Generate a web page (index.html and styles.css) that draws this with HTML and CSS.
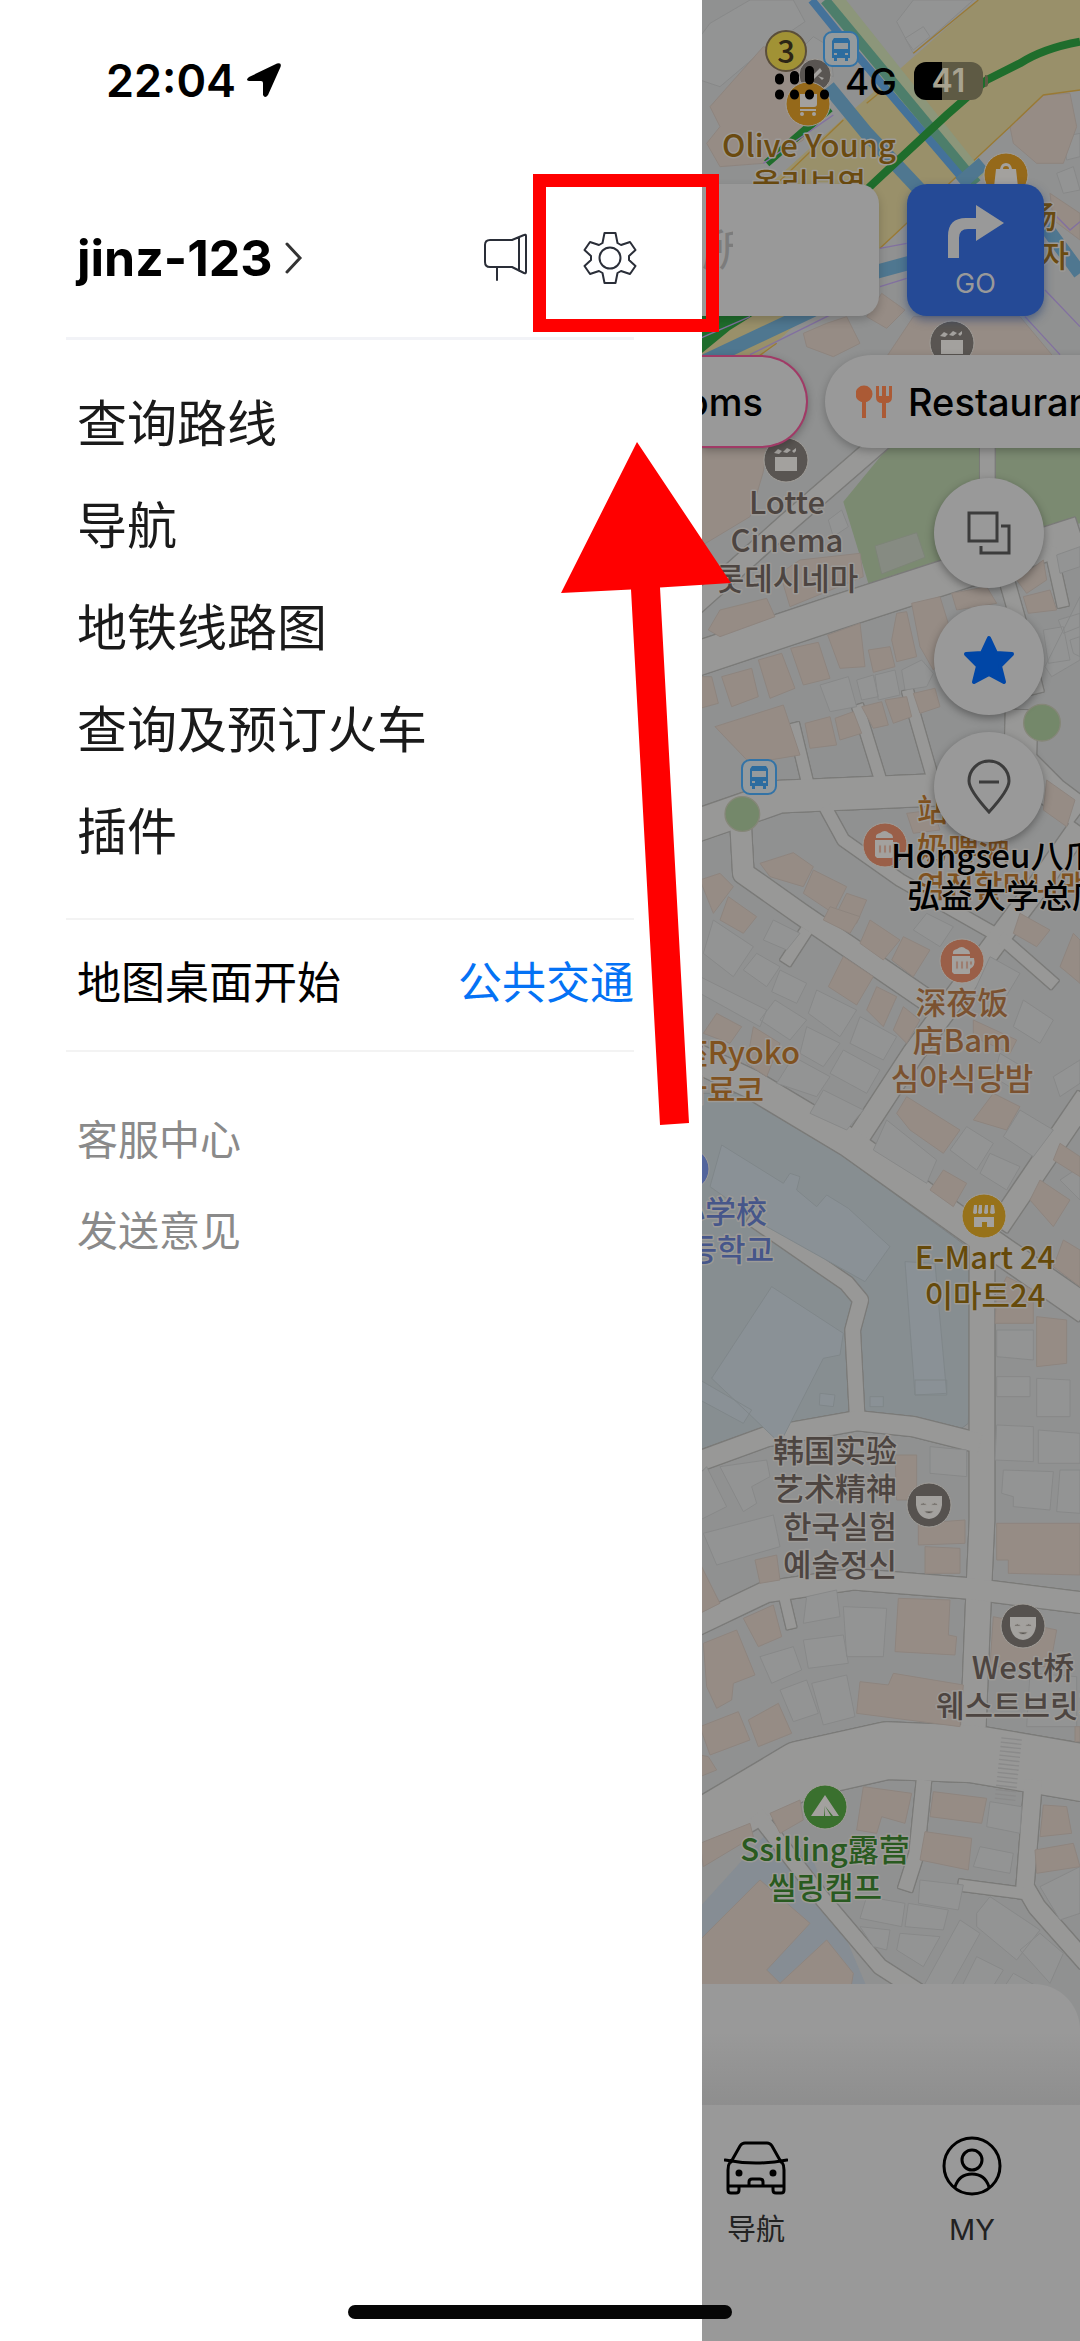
FILE: index.html
```html
<!DOCTYPE html>
<html lang="zh-CN">
<head>
	<meta charset="utf-8">
	<meta name="viewport" content="width=device-width,initial-scale=1.0">
	<title>地图</title>
	<link rel="stylesheet" href="styles.css">
</head>
<body>
	<!-- 左侧菜单 -->
	<aside class="drawer">
		<div class="status">
			<span class="time">22:04</span>
			<svg class="loc" viewBox="0 0 36 36"><path d="M3 15 31 1.500Q36 0 34.500 5L22 33Q19 37 17 33V21Q17 19 15 19H3Q-1 18 3 15Z"/></svg>
		</div>
		<header class="user">
			<a class="name" href="#">jinz-123
				<svg class="arrow" viewBox="0 0 18 32"><path d="M2 2 15 16 2 30"/></svg>
			</a>
			<button class="icon notice" aria-label="公告">
				<svg viewBox="0 0 46 48"><path d="M7 6H29L41 1Q43 0 43 2V38Q43 40 41 39L29 33H7Q2 33 2 28V11Q2 6 7 6ZM36 3V37M14 33V46"/></svg>
			</button>
			<button class="icon gear" aria-label="设置">
				<svg viewBox="0 0 48 48"><path d="M18.500 -1H29.500L31.500 9 35 11 44 8 49.500 16 43 22V26L49.500 32 44 40 35 37 31.500 39 29.500 49H18.500L16.500 39 13 37 4 40-1.500 32 5 26V22L-1.500 16 4 8 13 11 16.500 9Z"/><circle cx="24" cy="24" r="10.500"/></svg>
			</button>
		</header>
		<nav class="menu">
			<a href="#">查询路线</a>
			<a href="#">导航</a>
			<a href="#">地铁线路图</a>
			<a href="#">查询及预订火车</a>
			<a href="#">插件</a>
		</nav>
		<div class="start">
			<span>地图桌面开始</span>
			<a href="#">公共交通</a>
		</div>
		<nav class="help">
			<a href="#">客服中心</a>
			<a href="#">发送意见</a>
		</nav>
	</aside>

	<!-- 地图 -->
	<main class="app">
		<svg class="map" viewBox="2 0 378 2341" preserveAspectRatio="xMinYMin slice">
			<defs>
				<g id="roads">
					<path stroke-width="100" d="M-20 1980 400 1840 1140 1600"/>
					<path stroke-width="56" d="M-20 1820 260 1570 560 1310"/>
					<path stroke-width="44" d="M862 1300V1480M920 1740 960 1880 1010 2080"/>
					<path stroke-width="34" d="M280 2170 328 2370M472 2115 545 2350M622 2070 700 2340M1050 1640 1090 1820"/>
					<path stroke-width="95" d="M-20 2480 240 2390 700 2370 960 2300 965 2130"/>
					<path stroke-width="90" d="M960 2280 1060 2380 1140 2440"/>
					<path stroke-width="62" d="M120 2440 130 2620 300 2740 680 3000"/>
					<path stroke-width="36" d="M375 2420 430 2520 600 2640 900 2810"/>
					<path stroke-width="64" d="M1140 2480 1020 2650 900 2810 640 3160 470 3420"/>
					<path stroke-width="36" d="M900 2810 1065 2955M320 2790 255 2890"/>
					<path stroke-width="84" d="M-20 3170 150 3250 450 3430 800 3680 1160 3930"/>
					<path stroke-width="64" d="M1160 3290 895 3680"/>
					<path stroke-width="74" d="M846 3720V4560L836 4780 820 5180"/>
					<path stroke-width="44" d="M150 3650 440 3850 482 3900 458 3990 472 4260"/>
					<path stroke-width="58" d="M-20 4390 200 4310 470 4262 640 4280 840 4330"/>
					<path stroke-width="62" d="M-20 4880 200 4775 460 4738 800 4765 1160 4810"/>
					<path stroke-width="170" d="M-20 5500 300 5310 560 5252 820 5262 1160 5320"/>
					<path stroke-width="30" d="M250 4780 275 4885"/>
					<path stroke-width="44" d="M672 5340 650 5560 615 5670"/>
					<path stroke-width="52" d="M1000 5340 975 5660 1010 5720 1160 5890"/>
					<path stroke-width="34" d="M775 5655 970 5680"/>
					<path stroke-width="45" d="M170 5440 370 5700 540 5900 680 5990"/>
				</g>
				<g id="pin-film"><circle r="22"/><path class="glyph" d="M-11-3H11V11H-11ZM-12-7-8-11-4-9-7-6ZM-3-8 1-12 5-10 1-7ZM6-9 10-12V-9L8-7Z"/></g>
				<g id="pin-mask"><circle r="22"/><path class="glyph" d="M-13-9H13V0Q11 13 0 14-11 13-13 0Z"/><path d="M-9 0Q-6-4-2 0ZM2 0Q6-4 9 0ZM-5 6H5Q0 11-5 6Z"/></g>
				<g id="pin-beer"><circle r="22"/><path class="glyph" d="M-9-7Q-10-11-5-12 0-16 4-12 8-11 8-7ZM-10-5H8V-3H12Q14 5 8 8V12Q8 13 6 13H-8L-10 11Z"/><path d="M-6 0H-4V8H-6ZM-1 0H1V8H-1ZM4 0H6V8H4ZM8 0H10V4H8Z"/></g>
				<g id="bus"><rect class="bus-box" x="-17" y="-17" width="34" height="34" rx="8"/><path class="bus-body" fill-rule="evenodd" d="M-7-11H7L9-8V9H7V12H4V9H-4V12H-7V9H-9V-8ZM-7-6V0H7V-6ZM-7 4V6H-4V4ZM4 4V6H7V4Z"/></g>
			</defs>
			<rect class="ground" width="390" height="2400"/>
			<g transform="scale(.33333)">
				<!-- 校园, 公园, 广场 -->
				<path class="school" d="M0 3280H170L815 3750 805 4270 785 4285 640 4260 495 4243 300 4270 140 4305 0 4355Z"/>
				<path class="park" d="M590 1310H1140V1570L720 1690 505 1750 430 1505Z"/>
				<path class="square" d="M835 0H1140V270L1030 285 930 380 540 745 170 1080H0V740L380 400Z"/>
				<path class="canal" d="M0 5720 200 5500 330 5560 500 5960H180L0 5850Z"/>
				<use href="#roads" class="road-case"/>
				<use href="#roads" class="road"/>
				<!-- 建筑 -->
				<path class="lot" d="M0 110 30 70 150 0H280L315 65 190 150 60 260 0 240ZM590 65 640 0H820L640 160ZM340 110 390 140 400 230 280 170ZM615 115 670 80 690 110 640 150ZM1090 410 1140 400V470L1100 480ZM1070 520 1120 500 1140 570 1090 580Z"/>
				<path class="lot" d="M360 2055 445 2030 470 2120 390 2135ZM525 2025 585 2010 600 2085 535 2100ZM605 2010 665 1980 700 2020 680 2060 615 2070ZM470 2040 520 2025 535 2090 485 2100ZM1075 1860 1140 1840V1880L1090 1900ZM1030 1890 1090 1880 1110 1980 1045 1990ZM1110 1920 1140 1910V1970L1120 1960ZM1140 1790 1140 1980 1055 2030 1035 2000ZM385 1560 425 1530 445 1580 400 1610ZM1070 1665 1140 1640V1700L1080 1720Z"/>
				<path class="park-lot" d="M525 1638 650 1598 675 1672 545 1722Z"/>
				<path class="lot" d="M40 2760 160 2840 100 2930 10 2860ZM220 2760 300 2800 260 2850 190 2820ZM170 2860 240 2900 200 2960 130 2910ZM240 2910 320 2950 290 3010 215 2975ZM0 2930 200 3030 180 3080 0 2980ZM225 3000 320 3060 270 3120 180 3060ZM350 2970 470 3030 420 3110 325 3040ZM320 3080 420 3130 370 3200 300 3160ZM480 3050 590 3110 550 3180 450 3130ZM430 3150 540 3210 500 3280 390 3220ZM280 3170 390 3230 350 3290 230 3250ZM370 3270 490 3330 440 3390 330 3340ZM560 3360 710 3480 680 3550 520 3450ZM800 3380 880 3430 830 3510 750 3450ZM870 3460 960 3500 920 3570 840 3520ZM960 3330 1060 3390 1000 3470 910 3410ZM900 3160 1000 3220 960 3280 880 3230ZM870 2870 960 2920 900 3020 820 2980ZM970 3000 1060 3060 1020 3130 940 3080ZM680 2740 760 2780 720 2840 640 2790ZM1060 3230 1140 3180V3250L1080 3290ZM1080 3540 1140 3500V3600Z"/>
				<path class="lot" d="M890 3990 1000 3990V4080L890 4070ZM890 4130 990 4130V4190H890ZM1010 4135 1110 4140V4250H1010ZM890 4275 1000 4280V4385L885 4380ZM1015 4290 1140 4300V4390H1015ZM910 4410 1060 4415 1050 4530 940 4520V4490L905 4480ZM1080 4410H1140V4540L1070 4535ZM690 4340 800 4350V4430L690 4420ZM20 4400 80 4520 0 4560V4420ZM60 4400 130 4535 170 4510 155 4460 210 4430 200 4380ZM10 4600 220 4545 240 4640 50 4695ZM320 4790 410 4770 420 4850 310 4870ZM430 4820 560 4825 550 4970 440 4970ZM310 4920 430 4905 445 4990 325 5005ZM180 4970 280 4940 305 5010 215 5050ZM240 5070 320 5040 355 5140 280 5165ZM335 5050 440 5025 465 5150 370 5175ZM990 5020 1130 5030V5180L980 5180Z"/>
				<path class="lot" d="M870 5405 965 5420 960 5500 860 5480ZM840 5540 940 5560 930 5620 820 5600ZM660 5640 790 5655 775 5730 655 5710ZM625 5710 745 5730 730 5790 615 5780ZM500 5690 615 5710 605 5780 480 5755ZM480 5780 570 5790 560 5850 520 5840ZM600 5800 720 5810 670 5900 590 5850ZM780 5760 840 5800 740 5980 670 5960ZM830 5740 870 5690 1020 5790 950 5880 830 5780ZM960 5850 1020 5800 1090 5860 1050 5950ZM830 5870 910 5910 860 5990H770ZM940 5920 1050 5980H900ZM1020 5660 1140 5600V5740L1080 5760Z"/>
				<path class="house" d="M30 320 190 140 350 190 310 420 190 490 60 500 20 430 60 380ZM930 380 1030 285 1110 280 1130 380 1090 490 1010 490 940 430ZM310 1000 380 970 440 950 480 1030 400 1070 320 1040ZM500 950 545 880 615 930 560 985ZM640 950H960L1060 1070H560ZM1050 580 1140 640V720L1060 660ZM0 1345H200L190 1415 150 1550 0 1640ZM240 1720 300 1680 480 1660 490 1730 270 1820Z"/>
				<path class="house" d="M25 1890 60 1830 200 1795 225 1850 60 1910ZM65 2030 155 2005 175 2090 95 2120ZM175 1980 245 1960 285 2065 210 2095ZM272 1945 355 1927 390 2035 310 2055ZM383 1905 480 1870 495 2000 420 2005ZM505 1950 570 1940 585 2000 520 2017ZM590 1840 620 1835 650 1970 590 1985 575 1920ZM635 1810 720 1790 760 1920 700 2010 660 1940ZM755 1780 860 1760 890 1810 770 1830ZM0 2030H35L55 2110 0 2125ZM45 2180 250 2115 300 2265 150 2290ZM315 2170 390 2150 410 2235 330 2245ZM405 2155 460 2135 485 2200 420 2220ZM485 2120 545 2105 565 2175 520 2185ZM555 2100 620 2090 635 2150 580 2170ZM640 2080 705 2065 720 2120 660 2140ZM970 1790 1050 1770 1070 1830 985 1840ZM950 1740 1030 1680 1040 1740 980 1780ZM1040 2340 1125 2400 1100 2480 1030 2430ZM620 2440 700 2430 720 2490 640 2500ZM180 2590 280 2558 340 2600 310 2660 210 2630ZM340 2610 440 2660 400 2740 310 2680ZM440 2680 500 2700 470 2770 410 2740ZM0 2640 60 2620 100 2660 40 2740ZM85 2690 170 2750 130 2800 60 2760Z"/>
				<path class="house" d="M510 2760 600 2820 550 2880 480 2830ZM390 2720 480 2750 450 2800 370 2760ZM610 2810 690 2850 640 2930 575 2880ZM430 2870 520 2930 470 3015 385 2960ZM530 2960 590 2990 550 3080 500 3030ZM610 3020 660 3060 620 3130 580 3090ZM50 3040 125 3080 90 3130 10 3100ZM160 3080 240 3130 200 3230 140 3190ZM620 3290 780 3390 730 3460 630 3390 590 3340ZM880 3280 960 3320 920 3390 820 3360ZM730 3510 800 3550 760 3620 690 3570ZM960 2740 1050 2790 1010 2840 940 2800ZM1020 3540 1110 3600 1060 3680 990 3600ZM1080 3430 1140 3470V3530L1060 3480ZM1090 3720 1140 3750V3860L1060 3800ZM820 3060 950 3120 930 3160 820 3110ZM1120 2800 1140 2820V2950L1080 2900ZM890 3890 920 3830 1000 3870V3970H885ZM1010 3950 1100 3960V4090L1010 4100Z"/>
				<path class="house" d="M585 4365H650V4500H590ZM655 4570 795 4560V4630L655 4635ZM675 4640 780 4645V4720H675ZM890 4570H1140V4725L925 4720V4680H890ZM165 4680 230 4665 240 4740 180 4750ZM0 4690 60 4810 0 4840ZM595 4795 750 4800 745 4905 770 4910 765 4965 585 4955ZM480 5045 565 5055 580 5020 790 5055 780 5180 470 5140ZM130 4855 220 4815 245 4910 175 4940ZM10 4930 110 4890 165 5025 100 5050 95 5100 50 5125 20 5060ZM0 5180 115 5135 150 5220 30 5265ZM145 5160 235 5110 275 5200 175 5240ZM0 5265 25 5270 50 5310 0 5330ZM880 4850 1070 4890 1050 5000 870 5000ZM1125 5180H1140V5225H1125ZM490 5360 635 5380 615 5470 545 5450 530 5500 470 5490ZM700 5375 860 5395 845 5470 690 5450ZM675 5495 815 5515 805 5610 660 5580ZM210 5440 300 5400 310 5460 240 5500ZM0 5530 150 5470 160 5510 10 5600ZM1030 5415 1100 5420 1115 5500 1020 5510ZM1005 5550 1120 5530 1140 5600 1010 5620ZM0 5820 180 5640 330 5770 200 5910 240 5950 380 5820 460 5920 450 5980H0Z"/>
				<path class="campus" d="M65 3435 250 3550 270 3520 300 3530 290 3570 350 3620 380 3585 445 3625 570 3740 495 3845 200 3680 30 3560ZM215 3860 430 4000 420 4065 370 4075 240 4330 35 4135ZM615 3785 705 3790 740 4180 645 4185ZM360 4180 405 4185 400 4220 358 4215ZM510 4190H550V4220H510ZM645 4140H740V4185H645ZM0 4140 155 4230 130 4270 0 4200Z"/>
				<path class="stairs" d="M935 5215 915 5400"/>
				<circle class="tree" cx="1026" cy="2168" r="55"/>
				<circle class="tree" cx="127" cy="2442" r="52"/>
				<!-- 主干道 -->
				<path class="line-edge" d="M835 0 640 160M930 380 540 745M1140 270 1030 285 930 380M430 360 190 590M500 310 560 260M230 1030 160 1080"/>
				<path class="line-pale" d="M400 0 830 540"/>
				<path class="line-teal" d="M375 0 830 550"/>
				<path class="line-blue" d="M335 0 420 105 800 550"/>
				<path class="line-blue wide" d="M385 260 500 400 660 570M780 550 850 490M0 1090 340 930M530 815 640 785M1030 670 1140 820"/>
				<path class="verge" d="M0 940H170L90 990 0 1064Z"/>
				<path class="line-green" d="M1140 125Q1030 145 960 190L860 240 740 345 520 550 300 760 0 1000M390 325 200 490"/>
				<path class="line-violet" d="M400 345 190 490M540 745 620 730M540 860 620 835M0 1015 150 950M150 1064 400 940M975 950 1080 1064M1035 870 1140 980M1060 640 1110 690 1140 665"/>
			</g>
			<!-- 地点图标 -->
			<g class="pins">
				<g class="p-grey"><circle cx="115" cy="75" r="16"/><path class="glyph" d="M109 79 120 68 122 71 112 81ZM118 76 124 78 122 80Z"/></g>
				<g class="p-gold" transform="translate(108 104)"><circle r="22"/><path class="glyph" d="M-8-10H9V0Q9 3 6 3H-8ZM-8 5H8V7H-8Z"/><circle class="glyph" cx="-6" cy="10" r="2"/><circle class="glyph" cx="6" cy="10" r="2"/></g>
				<g class="p-gold" transform="translate(306 175)"><circle r="22"/><path class="glyph" fill-rule="evenodd" d="M-10-6H-6Q-5-12 0-12 5-12 6-6H10L12 12H-12ZM-3-6H3Q3-9 0-9-3-9-3-6Z"/></g>
				<use class="p-grey" href="#pin-film" x="252" y="343"/>
				<use class="p-grey" href="#pin-film" x="86" y="460"/>
				<use class="p-beer" href="#pin-beer" x="185" y="845"/>
				<use class="p-beer" href="#pin-beer" x="262" y="961"/>
				<circle class="p-blue" cx="-12" cy="1169" r="21"/>
				<g class="p-mart" transform="translate(284 1216)"><circle r="22"/><path class="glyph" d="M-10-11H-7V-3Q-9-1-11-3ZM-5-11H-2V-3Q-4-1-6-3ZM1-11H4V-3Q2-1 0-3ZM7-11H10L11-3Q8-1 6-3ZM-10 1H10V11H3V6H-2V11H-10Z"/></g>
				<use class="p-dark" href="#pin-mask" x="229" y="1505"/>
				<use class="p-dark" href="#pin-mask" x="323" y="1626"/>
				<g class="p-camp" transform="translate(125 1807)"><circle r="22"/><path class="glyph" fill-rule="evenodd" d="M0-12 14 9H8L0-1-1 9H-14ZM0-1V9H6Z"/></g>
				<use href="#bus" x="141" y="49"/>
				<use href="#bus" x="59" y="777"/>
				<circle class="exit" cx="86" cy="51" r="20"/>
			</g>
			<!-- 地点名称 -->
			<g class="labels">
				<text class="mid t-exit" x="86" y="63">3</text>
				<text class="mid t-brown" x="109" y="157">Olive Young</text>
				<text class="mid t-brown" x="109" y="195">올리브영</text>
				<text class="end t-brown" x="357" y="228">场</text>
				<text class="end t-brown" x="369" y="267">자</text>
				<text class="mid t-dark" x="87" y="514">Lotte</text>
				<text class="mid t-dark" x="87" y="552">Cinema</text>
				<text class="mid t-dark" x="87" y="590">롯데시네마</text>
				<text class="t-orange" x="217" y="821">站前奶</text>
				<text class="t-orange" x="217" y="859">奶啤酒</text>
				<text class="t-orange" x="217" y="897">역전할머니맥주</text>
				<text class="t-black" x="191" y="868">Hongseu八爪</text>
				<text class="t-black" x="207" y="908">弘益大学总店</text>
				<text class="mid t-food" x="262" y="1014">深夜饭</text>
				<text class="mid t-food" x="262" y="1052">店Bam</text>
				<text class="mid t-food" x="262" y="1090">심야식당밤</text>
				<text class="end t-orange" x="100" y="1064">座Ryoko</text>
				<text class="end t-orange" x="64" y="1101">자료코</text>
				<text class="end t-blue" x="67" y="1223">小学校</text>
				<text class="end t-blue" x="74" y="1261">등학교</text>
				<text class="mid t-mart" x="285" y="1269">E-Mart 24</text>
				<text class="mid t-mart" x="285" y="1307">이마트24</text>
				<text class="end t-dark" x="197" y="1462">韩国实验</text>
				<text class="end t-dark" x="197" y="1500">艺术精神</text>
				<text class="end t-dark" x="197" y="1538">한국실험</text>
				<text class="end t-dark" x="197" y="1576">예술정신</text>
				<text class="mid t-dark" x="323" y="1679">West桥</text>
				<text class="t-dark" x="236" y="1717">웨스트브릿지</text>
				<text class="mid t-camp" x="125" y="1861">Ssilling露营</text>
				<text class="mid t-camp" x="125" y="1899">씰링캠프</text>
			</g>
		</svg>

		<div class="status net">
			<svg class="signal" viewBox="0 0 54 34"><path d="M4.500 12V14M19.500 9.500V14M34.500 4.500V14"/><path d="M4.500 28V29M19.500 28V29M34.500 28V29M49.500 28V29"/></svg>
			<span class="cell">4G</span>
			<span class="battery">41</span>
			<span class="cap"></span>
		</div>
		<div class="search">
			<input class="keyword" type="text" placeholder="所" aria-label="搜索">
			<button class="go">
				<svg viewBox="0 0 56 54"><path d="M0 53V31Q0 13 18 13H28V0L56 18 28 36V24H20Q11 24 11 33V53Z"/></svg>
				<span>GO</span>
			</button>
		</div>
		<div class="chips">
			<button class="chip first">Rooms</button>
			<button class="chip">
				<svg viewBox="0 0 36 34"><circle cx="8" cy="9" r="8.500"/><path d="M6 14H10V33H6ZM20 1H23V11H26V1H30V11H33V1H36V12Q36 18 30 18V33H26V18Q20 18 20 12Z"/></svg>
				Restaurants
			</button>
		</div>
		<div class="tools">
			<button aria-label="图层"><svg viewBox="0 0 44 44"><path d="M2 2H30V30H2ZM34 15H42V42H14V35"/></svg></button>
			<button aria-label="收藏"><svg class="star" viewBox="0 0 52 50"><path d="M26 3 33 18 49 19 37 31 41 47 26 39 11 47 15 31 3 19 19 18Z"/></svg></button>
			<button aria-label="位置"><svg viewBox="0 0 44 56"><path d="M22 53Q2 31 2 22A20 20 0 0 1 42 22Q42 31 22 53ZM12 23H32"/></svg></button>
		</div>
		<div class="sheet"></div>
		<nav class="tabs">
			<a href="#">
				<svg viewBox="0 0 64 60"><path d="M7 26 16 10Q18 7 21 7H43Q46 7 48 10L57 26M1 24Q32 30 63 24M6 26Q4 29 4 34V50H60V34Q60 29 58 26M4 50V54Q4 57 7 57H12Q15 57 15 54V50M49 50V54Q49 57 52 57H57Q60 57 60 54V50M25 49V46Q25 43 28 43H36Q39 43 39 46V49"/><circle class="dot" cx="15" cy="37" r="2"/><circle class="dot" cx="49" cy="37" r="2"/></svg>
				<span>导航</span>
			</a>
			<a href="#">
				<svg viewBox="0 0 60 60"><circle cx="30" cy="30" r="28"/><circle cx="30" cy="24" r="10"/><path d="M13 51Q17 38 30 38 43 38 47 51"/></svg>
				<span>MY</span>
			</a>
		</nav>
	</main>

	<!-- 标注 -->
	<svg class="mark" viewBox="0 0 198 951">
		<circle cx="1" cy="51" r="6"/>
		<path fill-rule="evenodd" d="M0 0H186V158H0ZM13 13V145H173V13Z"/>
		<path d="M104 268 198 409 127 413.500 156 949 127 951 98 415.500 28 419Z"/>
	</svg>
	<div class="home"></div>
</body>
</html>
```
FILE: styles.css
```css
*{margin: 0;padding: 0;box-sizing: border-box;}
body{display: flex;min-height: 100vh;position: relative;overflow-x: hidden;background-color: #fff;font-family: "Inter","Noto Sans CJK SC",sans-serif;color: #000;}
a{color: inherit;text-decoration: none;}
button{border: 0;background: none;font: inherit;color: inherit;}
svg{display: block;flex: none;}

/* 左侧菜单 */
.drawer{width: 65%;padding: 0 68px 0 66px;background-color: #fff;}
.status{display: flex;align-items: center;height: 160px;}
.drawer .status{padding-left: 40px;gap: 10px;}
.time{font-size: 45px;font-weight: 600;}
.loc{width: 36px;height: 36px;}
.user{display: flex;align-items: center;height: 180px;padding: 18px 0 0 11px;border-bottom: 3px solid #f2f3f7;}
.name{display: flex;align-items: center;flex: 1;gap: 12px;font-size: 50px;font-weight: 700;}
.arrow{width: 18px;height: 32px;fill: none;stroke: #333;stroke-width: 3;stroke-linecap: round;}
.icon svg{height: 48px;overflow: visible;fill: none;stroke: #2a2e38;stroke-width: 2;stroke-linejoin: round;stroke-linecap: round;}
.notice{margin-right: 57px;}
.notice svg{width: 46px;}
.gear svg{width: 48px;}
.menu{display: flex;flex-direction: column;padding: 33px 11px 35px;border-bottom: 2px solid #f3f3f3;}
.menu a{font-size: 50px;line-height: 102px;color: #1a1a1a;}
.start{display: flex;justify-content: space-between;padding: 0 0 4px 11px;border-bottom: 2px solid #f3f3f3;font-size: 44px;line-height: 126px;}
.start a{color: #0472f5;}
.help{display: flex;flex-direction: column;padding: 43px 11px;}
.help a{font-size: 41px;line-height: 91px;color: #8a8a8a;}

/* 地图 */
.app{display: flex;flex-direction: column;flex: 1;min-width: 0;position: relative;overflow: hidden;background-color: #999;font-family: "Inter","Noto Sans CJK SC",sans-serif;}
.app > *{position: relative;}
.app .map{position: absolute;left: 0;top: 0;width: 100%;height: 100%;}
.ground{fill: #909191;}
.school{fill: #878e91;stroke: #7c8284;stroke-width: 3;}
.park{fill: #7b8a71;}
.park-lot{fill: #868b82;stroke: #7d8577;stroke-width: 3;}
.square{fill: #99906a;}
.canal{fill: #868d94;}
.road-case{fill: none;stroke: #7b7b79;stroke-linejoin: round;}
.road{fill: none;stroke: #989897;stroke-linejoin: round;}
.road-case{filter: drop-shadow(0 3px 0 #7b7b79) drop-shadow(0 -3px 0 #7b7b79) drop-shadow(3px 0 0 #7b7b79) drop-shadow(-3px 0 0 #7b7b79);}
.lot{fill: #939494;stroke: #888989;stroke-width: 3;}
.house{fill: #968c85;stroke: #8e857e;stroke-width: 3;}
.campus{fill: #8a9196;stroke: #80878a;stroke-width: 3;}
.stairs{fill: none;stroke: #8a8a8a;stroke-width: 62;stroke-dasharray: 4 9;}
.tree{fill: #74886a;stroke: #858778;stroke-width: 4;}
.verge{fill: #1f6d2c;}
.line-edge,.line-pale,.line-teal,.line-blue,.line-green,.line-violet{fill: none;}
.line-edge{stroke: #9a7a34;stroke-width: 4;}
.line-pale{stroke: #8c967a;stroke-width: 60;}
.line-teal{stroke: #4d7e6b;stroke-width: 30;}
.line-blue{stroke: #44729a;stroke-width: 24;}
.line-blue.wide{stroke: #4f7790;stroke-width: 42;}
.line-green{stroke: #1f6d2c;stroke-width: 24;}
.line-violet{stroke: #8270a0;stroke-width: 4;}

.pins > *{stroke: #a09d98;stroke-width: 1;}
.pins .glyph,.glyph{fill: #a3a19e;stroke: none;}
.p-grey{fill: #595552;}
.p-dark{fill: #56524f;}
.p-gold{fill: #95691a;}
.p-mart{fill: #97721a;}
.p-beer{fill: #9a5f48;}
.p-blue{fill: #53659c;}
.p-camp{fill: #3a702e;}
.exit{fill: #a19235;}
.pins .exit{stroke: #5a4e3a;stroke-width: 2;}
.bus-box{fill: #949a9d;stroke: #3373a6;stroke-width: 2;}
.bus-body{fill: #2c6c9f;stroke: none;}

.labels{font-family: "Noto Sans CJK SC","Noto Sans CJK KR",sans-serif;font-size: 31px;font-weight: 500;stroke: #9c9a97;stroke-width: 3;stroke-linejoin: round;paint-order: stroke;}
.mid{text-anchor: middle;}
.end{text-anchor: end;}
.t-exit{fill: #2c2515;stroke: none;}
.t-brown{fill: #6b4b10;}
.t-dark{fill: #4d4541;}
.t-orange{fill: #80521f;}
.t-food{fill: #7b5230;}
.t-blue{fill: #46568a;}
.t-mart{fill: #664a0a;}
.t-camp{fill: #295a20;}
.t-black{fill: #000;font-size: 33px;}

.net{height: 184px;padding: 0 0 22px 73px;}
.signal{width: 54px;height: 34px;margin-top: 4px;fill: none;stroke: #000;stroke-width: 9;stroke-linecap: round;}
.cell{margin-left: 16px;font-size: 37px;font-weight: 500;}
.battery{width: 69px;height: 38px;margin-left: 17px;border-radius: 12px;background-image: linear-gradient(90deg,#000 41%,#5e5a44 41%);color: #a8a390;font-size: 32px;font-weight: 600;line-height: 38px;text-align: center;}
.cap{width: 3px;height: 12px;margin-left: 2px;border-radius: 0 3px 3px 0;background-color: #5e5a44;}
.search{display: flex;gap: 28px;height: 132px;padding-right: 36px;}
.keyword{flex: 1;min-width: 0;padding-right: 146px;border: 0;border-radius: 0 20px 20px 0;background-color: #999;box-shadow: 0 4px 10px rgba(0,0,0,.2);font: inherit;font-size: 44px;text-align: right;}
.keyword::placeholder{color: #7c7c7c;opacity: 1;}
.go{display: flex;flex-direction: column;align-items: center;width: 137px;padding-top: 21px;border-radius: 20px;background-color: #254a96;box-shadow: 0 4px 10px rgba(20,50,110,.5);color: #999;font-size: 27px;}
.go svg{width: 56px;height: 54px;margin-bottom: 8px;fill: #999;}
.chips{display: flex;gap: 17px;margin-top: 39px;}
.chip{display: flex;align-items: center;flex: none;gap: 16px;height: 93px;padding: 0 31px;border-radius: 47px;background-color: #999;box-shadow: 0 3px 8px rgba(0,0,0,.25);font-size: 38px;font-weight: 500;}
.chip svg{width: 36px;height: 34px;fill: #ab5a35;}
.first{justify-content: flex-end;width: 106px;padding-right: 43px;border: 2px solid #a03a66;border-left: 0;border-radius: 0 47px 47px 0;overflow: hidden;}
.tools{display: flex;flex-direction: column;align-items: flex-end;gap: 17px;padding: 30px 36px 0 0;}
.tools button{display: flex;align-items: center;justify-content: center;width: 110px;height: 110px;border-radius: 50%;background-color: #999;box-shadow: 0 3px 8px rgba(0,0,0,.35);}
.tools svg{width: 44px;fill: none;stroke: #3c3c3c;stroke-width: 3;}
.tools .star{width: 52px;fill: #0046a6;stroke: #0046a6;stroke-width: 4;stroke-linejoin: round;}
.sheet{height: 121px;margin-top: auto;border-radius: 0 46px 0 0;background-image: linear-gradient(#999 40%,#8e8e8e);}
.tabs{display: flex;justify-content: flex-end;height: 236px;background-color: #999;}
.tabs a{display: flex;flex-direction: column;align-items: center;flex: none;width: 20vw;padding-top: 31px;gap: 14px;color: #222;font-size: 29px;line-height: 40px;}
.tabs svg{height: 60px;width: 64px;fill: none;stroke: #000;stroke-width: 3;stroke-linecap: round;}
.tabs .dot{fill: #000;}

.mark{position: absolute;left: 533px;top: 174px;width: 198px;height: 951px;fill: #f00;pointer-events: none;}
.home{position: absolute;left: 50%;bottom: 22px;width: 384px;height: 14px;margin-left: -192px;border-radius: 7px;background-color: #060606;}
```
